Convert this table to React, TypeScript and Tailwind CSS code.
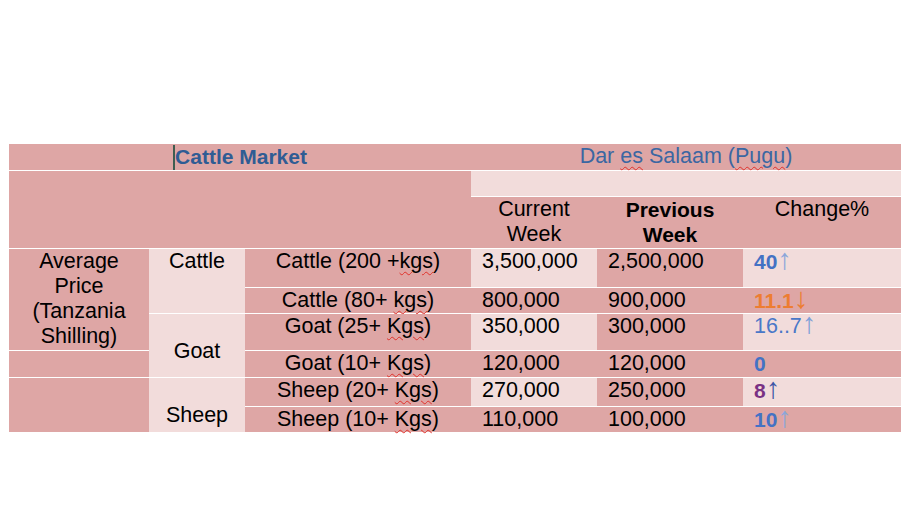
const dark = 'bg-[#dea6a5]';
const light = 'bg-[#f2dcdb]';

function Squig({ children }: { children: React.ReactNode }) {
  return (
    <span className="underline decoration-wavy decoration-[#e0302a] decoration-1 underline-offset-[3px]">
      {children}
    </span>
  );
}

function Arrow({ down, className }: { down?: boolean; className: string }) {
  return <span className={`text-[29px] leading-[0] ${className}`}>{down ? '↓' : '↑'}</span>;
}

export default function App() {
  const line = 'border-b border-white';
  return (
    <div className="w-[919px] h-[517px] bg-white pt-[144px] pl-[9px] font-['Liberation_Sans',Arial,sans-serif] text-[21.5px] leading-[25px] text-black">
      <div className="grid w-[892px] grid-cols-[140px_96px_226px_126px_146px_158px] grid-rows-[27px_26px_52px_39px_26px_37px_27px_29px_25px]">
        {/* title row */}
        <div className={`${dark} ${line} col-span-3 text-center`}>
          <span className="inline-block w-[2px] h-[25px] bg-[#3f5d50] align-[-6px]" />
          <span className="font-bold text-[21px] text-[#2f5c94]">Cattle Market</span>
        </div>
        <div className={`${dark} ${line} col-span-3 text-center text-[#3b67a2]`}>
          Dar <Squig>es</Squig> Salaam (<Squig>Pugu</Squig>)
        </div>

        {/* blank / headings */}
        <div className={`${dark} ${line} col-span-3 row-span-2`} />
        <div className={`${light} ${line} col-span-3`} />
        <div className={`${dark} ${line} text-center`}>
          Current
          <br />
          Week
        </div>
        <div className={`${dark} ${line} text-center font-bold text-[21px]`}>
          Previous
          <br />
          Week
        </div>
        <div className={`${dark} ${line} text-center`}>Change%</div>

        {/* cattle 200 */}
        <div className={`${dark} ${line} row-span-3 text-center px-[7px]`}>
          Average
          <br />
          Price
          <br />
          (Tanzania
          <br />
          Shilling)
        </div>
        <div className={`${light} ${line} row-span-2 text-center`}>Cattle</div>
        <div className={`${dark} ${line} text-center`}>
          Cattle (200 +<Squig>kgs</Squig>)
        </div>
        <div className={`${light} ${line} pl-[11px]`}>3,500,000</div>
        <div className={`${dark} ${line} pl-[11px]`}>2,500,000</div>
        <div className={`${light} ${line} pl-[11px]`}>
          <span className="font-bold text-[21px] text-[#4472c4]">40</span>
          <Arrow className="text-[#8ba6da]" />
        </div>

        {/* cattle 80 */}
        <div className={`${dark} ${line} text-center`}>
          Cattle (80+ <Squig>kgs</Squig>)
        </div>
        <div className={`${dark} ${line} pl-[11px]`}>800,000</div>
        <div className={`${dark} ${line} pl-[11px]`}>900,000</div>
        <div className={`${dark} ${line} pl-[11px]`}>
          <span className="font-bold text-[21px] text-[#ed7d31]">11.1</span>
          <Arrow down className="text-[#ed7d31]" />
        </div>

        {/* goat 25 */}
        <div className={`${light} ${line} row-span-2 text-center pt-[25px]`}>Goat</div>
        <div className={`${dark} ${line} text-center`}>
          Goat (25+ <Squig>Kgs</Squig>)
        </div>
        <div className={`${light} ${line} pl-[11px]`}>350,000</div>
        <div className={`${dark} ${line} pl-[11px]`}>300,000</div>
        <div className={`${light} ${line} pl-[11px] text-[#4a78c8]`}>
          16..7<Arrow className="text-[#7f9fd8]" />
        </div>

        {/* goat 10 */}
        <div className={`${dark} ${line}`} />
        <div className={`${dark} ${line} text-center`}>
          Goat (10+ <Squig>Kgs</Squig>)
        </div>
        <div className={`${dark} ${line} pl-[11px]`}>120,000</div>
        <div className={`${dark} ${line} pl-[11px]`}>120,000</div>
        <div className={`${dark} ${line} pl-[11px]`}>
          <span className="font-bold text-[21px] text-[#4472c4]">0</span>
        </div>

        {/* sheep 20 */}
        <div className={`${dark} row-span-2`} />
        <div className={`${light} row-span-2 text-center pt-[25px]`}>Sheep</div>
        <div className={`${dark} ${line} text-center`}>
          Sheep (20+ <Squig>Kgs</Squig>)
        </div>
        <div className={`${light} ${line} pl-[11px]`}>270,000</div>
        <div className={`${dark} ${line} pl-[11px]`}>250,000</div>
        <div className={`${light} ${line} pl-[11px]`}>
          <span className="font-bold text-[21px] text-[#7a3184]">8</span>
          <Arrow className="font-bold text-[#3e56a6]" />
        </div>

        {/* sheep 10 */}
        <div className={`${dark} text-center`}>
          Sheep (10+ <Squig>Kgs</Squig>)
        </div>
        <div className={`${dark} pl-[11px]`}>110,000</div>
        <div className={`${dark} pl-[11px]`}>100,000</div>
        <div className={`${dark} pl-[11px]`}>
          <span className="font-bold text-[21px] text-[#4472c4]">10</span>
          <Arrow className="text-[#8ba6da]" />
        </div>
      </div>
    </div>
  );
}
